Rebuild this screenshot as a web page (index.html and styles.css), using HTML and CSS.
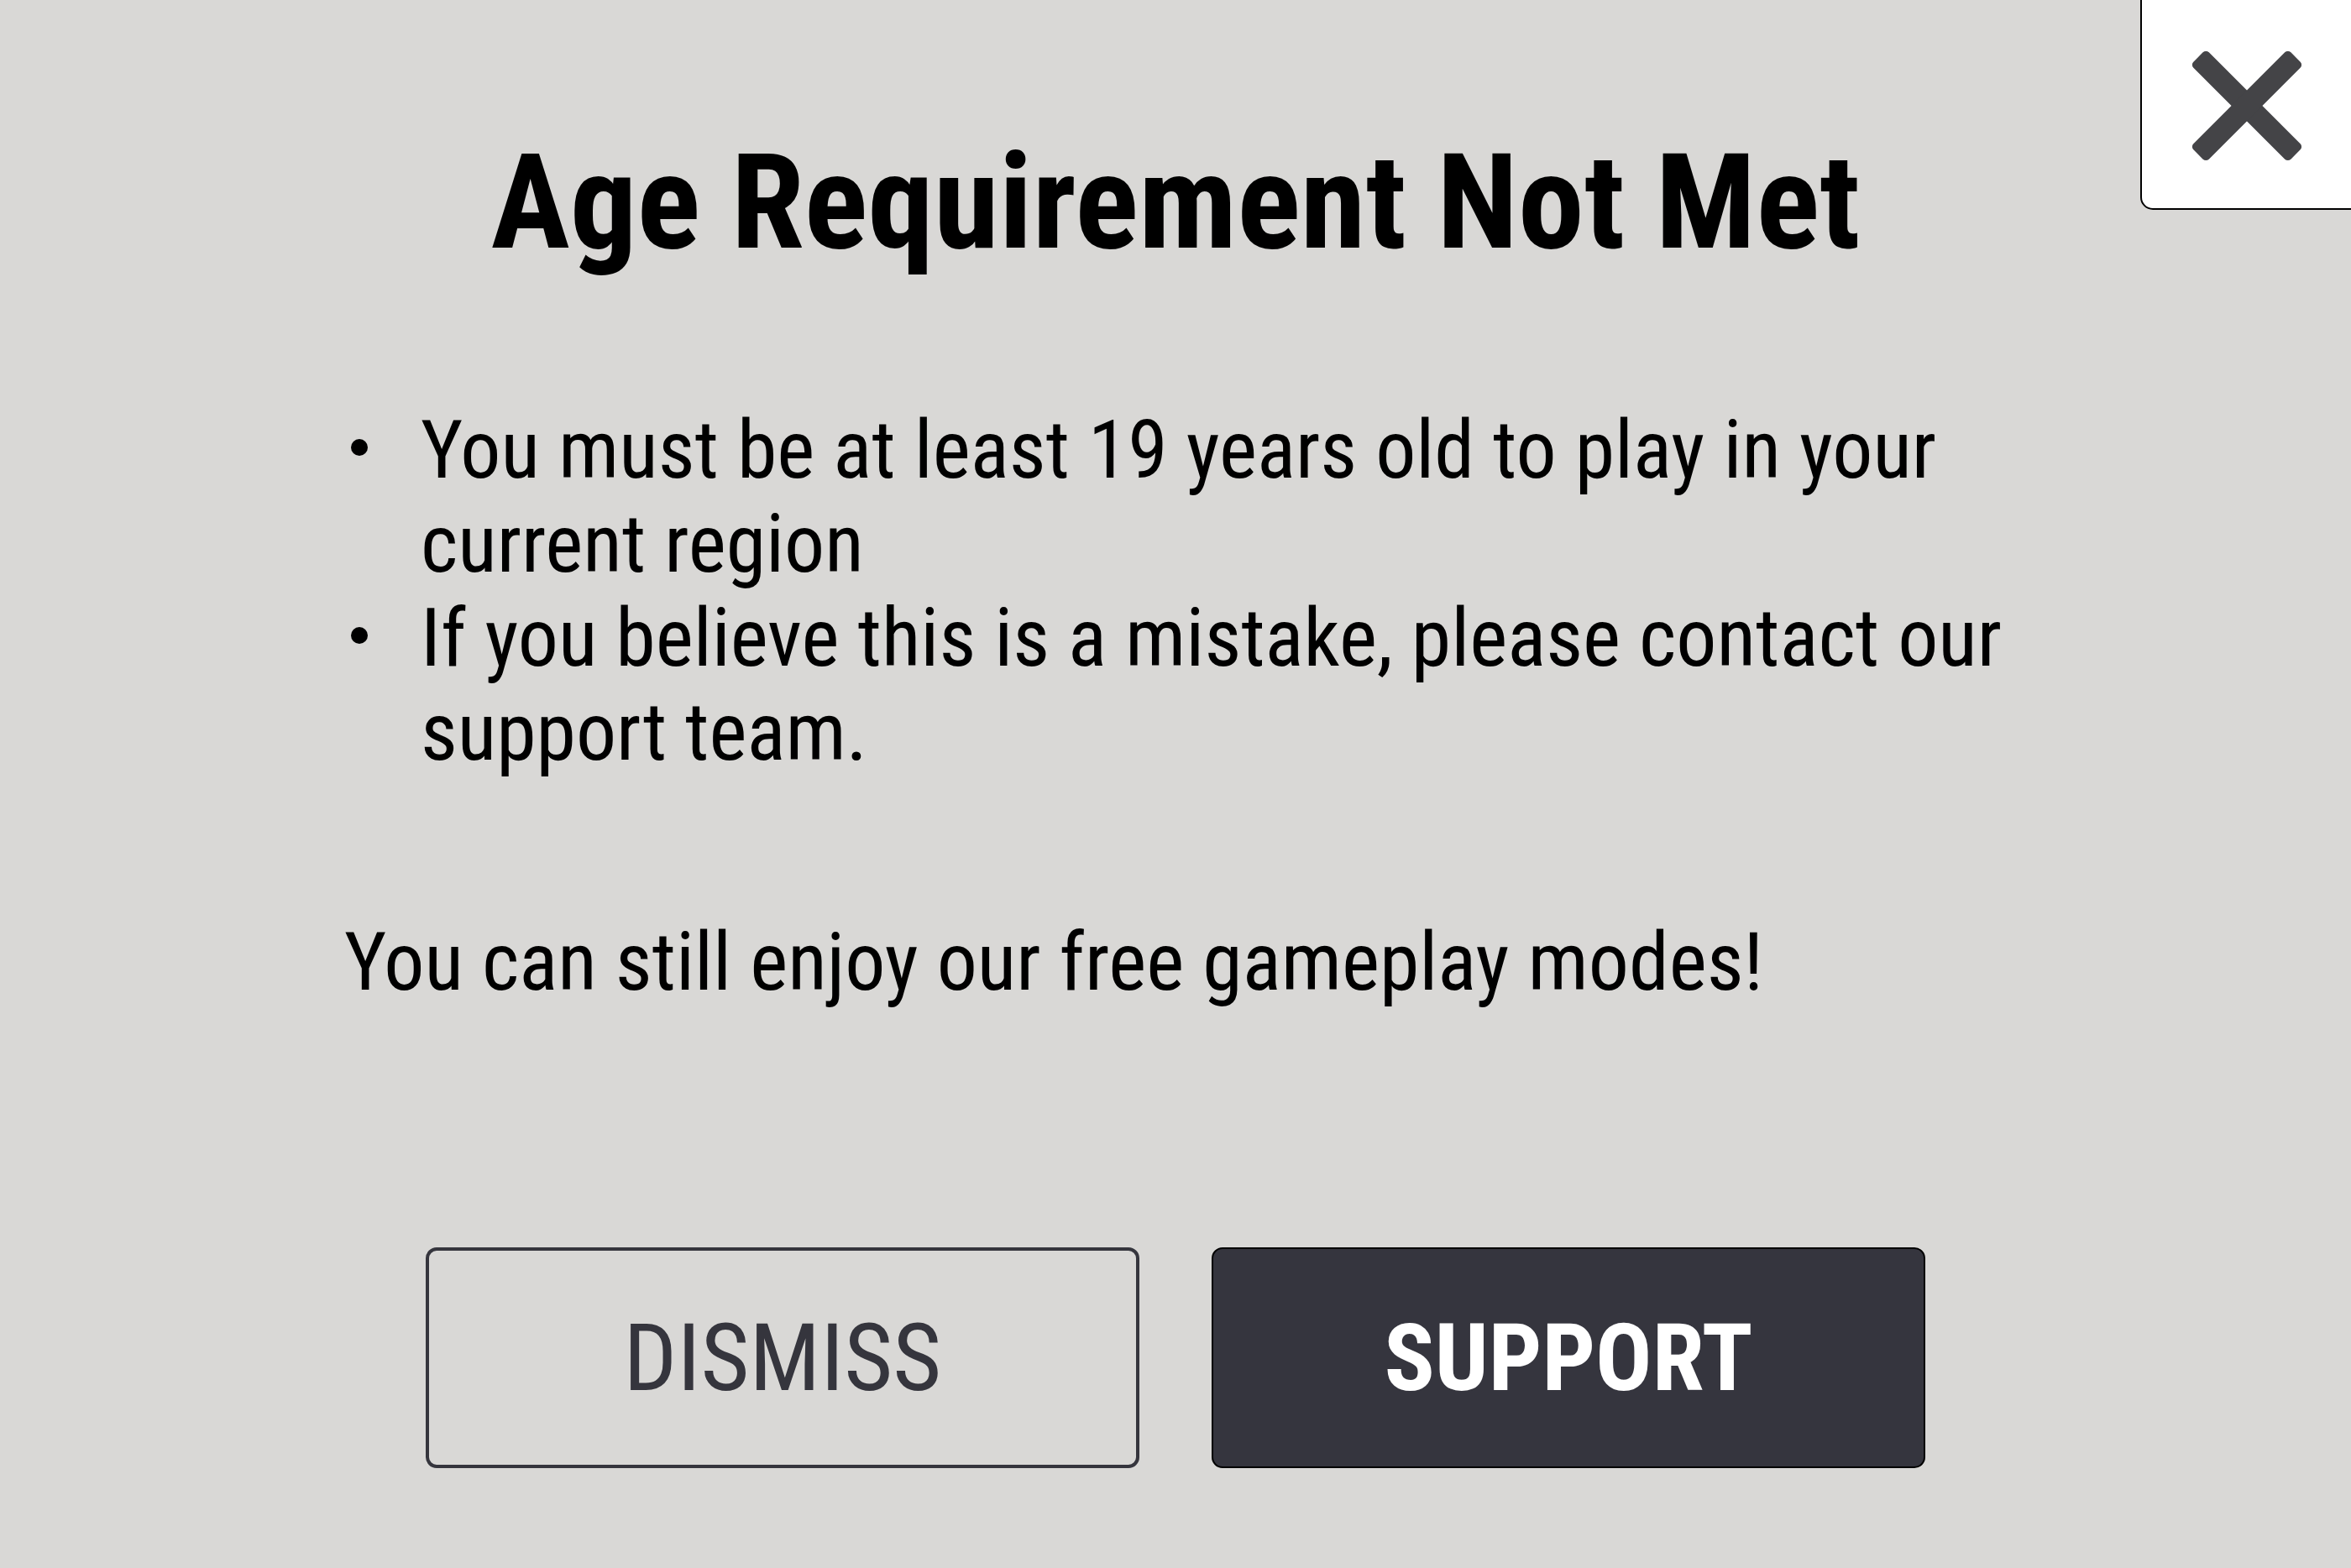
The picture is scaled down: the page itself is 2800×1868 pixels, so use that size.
FILE: index.html
```html
<!DOCTYPE html>
<html lang="en">
<head>
  <meta charset="UTF-8" />
  <meta name="viewport" content="width=device-width, initial-scale=1.0" />
  <title>Age Requirement Not Met</title>
  <link rel="stylesheet" href="styles.css">
</head>
<body>
  <div class="dialog">
    <button class="close-btn" aria-label="Close">
      <svg width="134" height="134" viewBox="0 0 134 134">
        <rect x="-15" y="54" width="164" height="26" rx="5" fill="#444447" transform="rotate(45 67 67)" />
        <rect x="-15" y="54" width="164" height="26" rx="5" fill="#444447" transform="rotate(-45 67 67)" />
      </svg>
    </button>

    <h1 class="title">Age Requirement Not Met</h1>

    <div class="content">
      <ul class="rules">
        <li><span class="dot"></span><span>You must be at least 19 years old to play in your current region</span></li>
        <li><span class="dot"></span><span>If you believe this is a mistake, please contact our support team.</span></li>
      </ul>
      <p class="note">You can still enjoy our free gameplay modes!</p>
    </div>

    <div class="actions">
      <button class="btn btn-outline">DISMISS</button>
      <button class="btn btn-dark">SUPPORT</button>
    </div>
  </div>
</body>
</html>
```

FILE: styles.css
```css
html, body {
  margin: 0;
  height: 100%;
}
body {
  font-family: "Roboto Condensed", Roboto, "Liberation Sans Narrow", sans-serif;
  background-color: #d9d8d6;
  color: #000000;
  overflow: hidden;
}
.dialog {
  position: relative;
  height: 100%;
  box-sizing: border-box;
  padding-top: 148px;
}
.close-btn {
  position: absolute;
  top: -2px;
  right: -2px;
  width: 253px;
  height: 252px;
  padding: 0;
  display: flex;
  justify-content: center;
  align-items: center;
  background-color: #ffffff;
  border: 2px solid #000000;
  border-bottom-left-radius: 15px;
  cursor: pointer;
}
.close-btn svg {
  margin-top: 4px;
}
.title {
  margin: 0;
  text-align: center;
  font-size: 158px;
  font-weight: bold;
  line-height: normal;
}
.content {
  margin-top: 146px;
  padding: 0 400px 0 410px;
}
.rules {
  list-style: none;
  margin: 0;
  padding: 0;
}
.rules li {
  display: flex;
  align-items: flex-start;
  font-size: 96px;
  line-height: normal;
}
.dot {
  flex: none;
  width: 20px;
  height: 20px;
  margin: 43px 63px 0 8px;
  border-radius: 50%;
  background-color: #000000;
}
.note {
  margin: 162px 0 0;
  font-size: 96px;
  line-height: normal;
}
.actions {
  display: flex;
  justify-content: center;
  gap: 86px;
  margin-top: 284px;
}
.btn {
  width: 850px;
  height: 263px;
  border-radius: 13px;
  font-family: inherit;
  font-size: 112px;
  line-height: 1;
  cursor: pointer;
}
.btn-outline {
  background-color: transparent;
  border: 4px solid #35353d;
  color: #35353d;
}
.btn-dark {
  background-color: #35353e;
  border: 2px solid #000000;
  color: #ffffff;
  font-weight: bold;
}
```
